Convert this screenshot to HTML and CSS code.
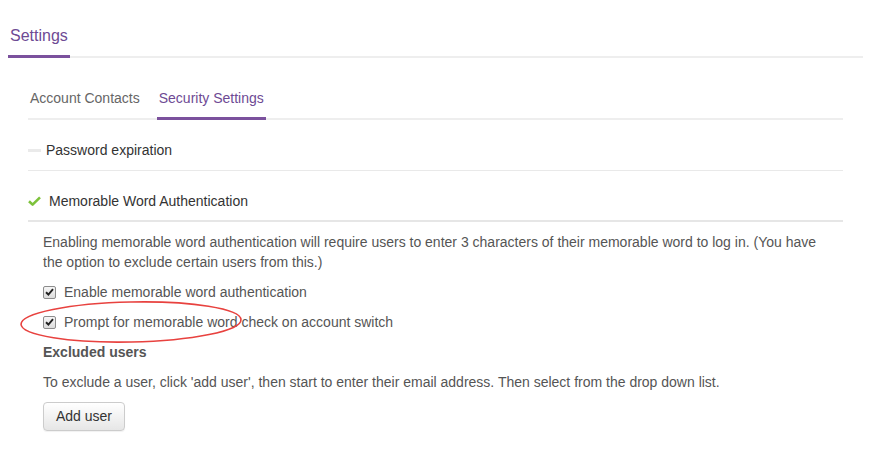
FILE: index.html
```html
<!DOCTYPE html>
<html lang="en">
<head>
<meta charset="utf-8">
<title>Settings</title>
<link rel="stylesheet" href="styles.css">
</head>
<body>
<div class="page">
  <div class="main-tabs">
    <div class="main-tab">Settings</div>
  </div>
  <div class="section">
    <div class="sub-tabs">
      <div class="sub-tab">Account Contacts</div>
      <div class="sub-tab active">Security Settings</div>
    </div>
    <div class="row row-first">
      <span class="dash"></span>
      <span class="row-title">Password expiration</span>
    </div>
    <div class="row row-open">
      <svg class="check" width="13" height="10" viewBox="0 0 13 10"><path d="M1 5.2 L4.6 8.6 L12 1.4" fill="none" stroke="#7dc23b" stroke-width="2.6" stroke-linejoin="round"/></svg>
      <span class="row-title">Memorable Word Authentication</span>
    </div>
    <div class="content">
      <p class="desc">Enabling memorable word authentication will require users to enter 3 characters of their memorable word to log in. (You have the option to exclude certain users from this.)</p>
      <div class="option"><span class="box"><svg width="9" height="8" viewBox="0 0 9 8"><path d="M1 4.2 L3.4 6.5 L8 1.2" fill="none" stroke="#222" stroke-width="1.9"/></svg></span>Enable memorable word authentication</div>
      <div class="option"><span class="box"><svg width="9" height="8" viewBox="0 0 9 8"><path d="M1 4.2 L3.4 6.5 L8 1.2" fill="none" stroke="#222" stroke-width="1.9"/></svg></span>Prompt for memorable word check on account switch</div>
      <div class="sub-heading">Excluded users</div>
      <div class="hint">To exclude a user, click 'add user', then start to enter their email address. Then select from the drop down list.</div>
      <button class="btn">Add user</button>
    </div>
  </div>
  <svg class="annotation" width="230" height="46" viewBox="0 0 230 46"><ellipse cx="113" cy="23" rx="110" ry="20" fill="none" stroke="#e8423f" stroke-width="1.6" transform="rotate(-1.2 113 23)"/></svg>
</div>
</body>
</html>
```

FILE: styles.css
```css
* { box-sizing: border-box; }
html, body { margin: 0; padding: 0; background: #fff; }
body {
  font-family: "Liberation Sans", Arial, sans-serif;
  font-size: 14px;
  color: #555;
}
.page {
  position: relative;
  width: 871px;
  height: 451px;
  padding: 0 8px;
}
.main-tabs {
  display: flex;
  border-bottom: 2px solid #eeeeee;
}
.main-tab {
  font-size: 16px;
  line-height: 18px;
  color: #6e4a94;
  padding: 27px 2px 10px;
  border-bottom: 3px solid #7b519d;
  margin-bottom: -2px;
}
.section {
  padding: 0 20px;
}
.sub-tabs {
  display: flex;
  gap: 15px;
  margin-top: 22px;
  border-bottom: 2px solid #eeeeee;
}
.sub-tab {
  line-height: 16px;
  padding: 10px 2px 11px;
  color: #666;
  border-bottom: 3px solid transparent;
  margin-bottom: -2px;
}
.sub-tab.active {
  color: #6e4a94;
  border-bottom-color: #7b519d;
}
.row {
  display: flex;
  align-items: center;
  line-height: 18px;
  color: #333;
}
.row-first {
  padding: 21px 0 11px;
  border-bottom: 1px solid #e9e9e9;
}
.row-open {
  padding: 21px 0 10px;
  border-bottom: 2px solid #e6e6e6;
}
.dash {
  display: inline-block;
  width: 13px;
  height: 3px;
  background: #eaeaea;
  margin: 0 5px 0 0;
}
.check {
  margin: 0 8px 0 0;
  flex: none;
}
.row-title { color: #333; }
.content {
  padding: 10px 15px 0;
}
.desc {
  margin: 0;
  line-height: 20px;
}
.option {
  display: flex;
  align-items: center;
  line-height: 20px;
  margin-top: 10px;
}
.box {
  width: 13px;
  height: 13px;
  border: 1px solid #8c8c8c;
  border-radius: 2px;
  background: linear-gradient(#f6f6f6, #dcdcdc);
  display: inline-flex;
  align-items: center;
  justify-content: center;
  margin-right: 8px;
  flex: none;
}
.box svg { display: block; }
.sub-heading {
  font-weight: bold;
  line-height: 20px;
  margin-top: 10px;
}
.hint {
  line-height: 20px;
  margin-top: 10px;
}
.btn {
  display: block;
  margin-top: 10px;
  font-family: "Liberation Sans", Arial, sans-serif;
  font-size: 14px;
  line-height: 15px;
  color: #333;
  padding: 6px 12px;
  border: 1px solid #ccc;
  border-radius: 4px;
  background: linear-gradient(#ffffff, #e6e6e6);
  box-shadow: 0 1px 1px rgba(0,0,0,0.06);
}
.annotation {
  position: absolute;
  left: 18px;
  top: 299px;
}
```
